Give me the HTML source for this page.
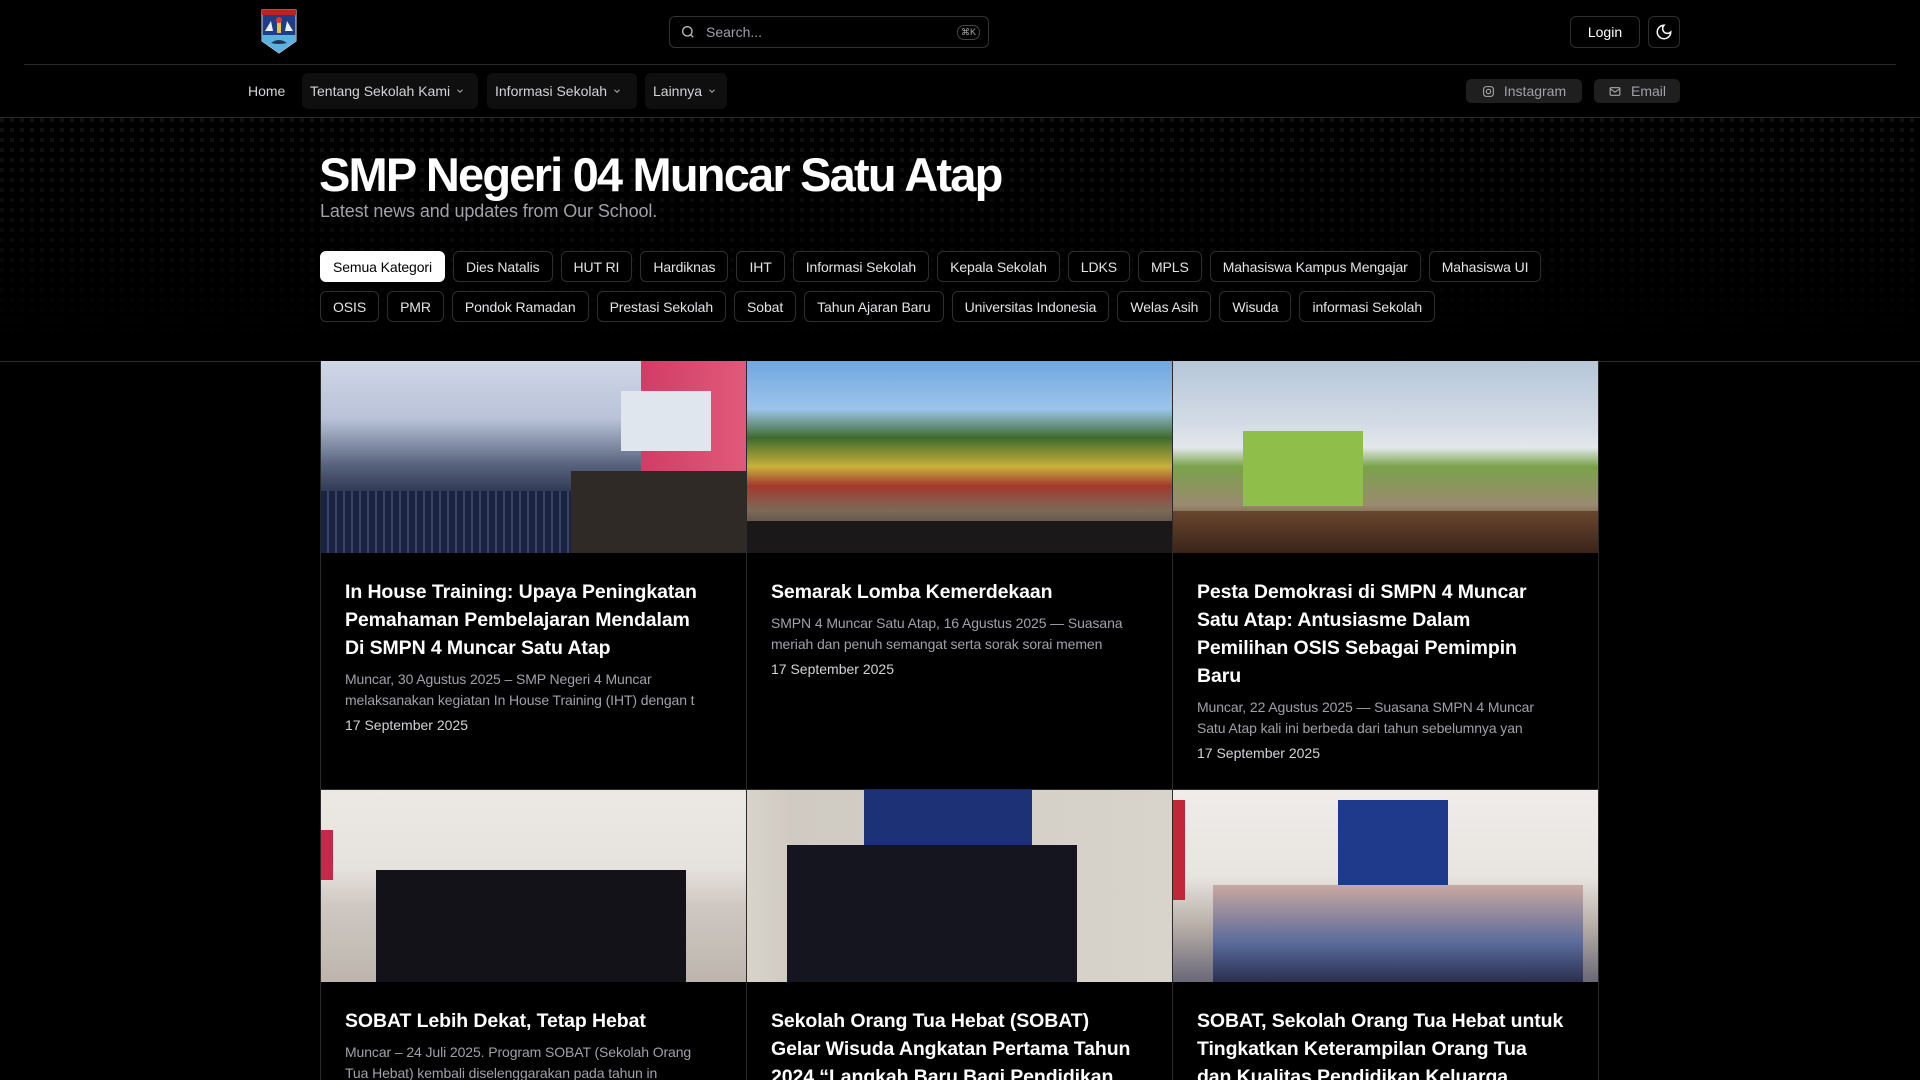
<!DOCTYPE html>
<html style="height:1080px;overflow:hidden"><head><meta charset="utf-8"><style>
*{box-sizing:border-box;margin:0;padding:0}
body{width:1920px;height:1080px;overflow:hidden;background:#000;color:#fff;font-family:"Liberation Sans",sans-serif;position:relative}
.abs{position:absolute}
.hl{position:absolute;height:1px;background:#2a2a2a}
.btn{position:absolute;border:1px solid #2e2e2e;border-radius:6px;display:flex;align-items:center;justify-content:center;font-size:14px}
.pill{position:absolute;top:73px;height:36px;background:#0f0f0f;border-radius:6px;display:flex;align-items:center;padding:0 8px;font-size:14px;color:#d4d4d8;white-space:nowrap}
.pill svg{margin-left:5px}
.soc{position:absolute;top:79px;height:24px;background:#1f1f1f;border-radius:5px;display:flex;align-items:center;justify-content:center;font-size:14px;color:#a1a1aa;gap:9px}
.dots{position:absolute;left:0;top:118px;width:1920px;height:230px;background-image:linear-gradient(90deg,transparent 4px,#000 4px),linear-gradient(transparent 4px,#000 4px);background-size:10px 10px;background-color:#121212;-webkit-mask-image:linear-gradient(rgba(0,0,0,.9) 0%,rgba(0,0,0,.4) 60%,transparent 100%);mask-image:linear-gradient(rgba(0,0,0,.9) 0%,rgba(0,0,0,.4) 60%,transparent 100%)}
.chips{position:absolute;left:320px;width:1300px;display:flex;gap:8px;flex-wrap:wrap}
.chip{height:31px;border:1px solid #2e2e2e;border-radius:6px;padding:0 12px;display:flex;align-items:center;font-size:14px;color:#e4e4e7;white-space:nowrap;letter-spacing:-.1px;background:#000}
.chip.on{background:#fff;color:#000;border-color:#fff}
.card{position:absolute;width:426px;border-left:1px solid #2a2a2a;border-bottom:1px solid #2a2a2a;overflow:hidden}
.img{height:192px;position:relative;overflow:hidden}
.ct{padding:25px 24px 0 24px}
.t{font-size:19.5px;font-weight:bold;line-height:28px;white-space:nowrap;letter-spacing:-.1px}
.e{margin-top:7px;font-size:14px;line-height:20.5px;color:#a1a1aa;white-space:nowrap;letter-spacing:-.1px}
.d{margin-top:7px;font-size:14px;color:#d4d4d8}
</style></head><body>
<svg class="abs" style="left:261px;top:9px" width="36" height="45" viewBox="0 0 36 45">
<path d="M1 1H35V32L18 44L1 32Z" fill="#1d3d8a" stroke="#ddd" stroke-width="1"/>
<rect x="1" y="1" width="34" height="5" fill="#b22"/>
<path d="M1 26H35V32L18 44L1 32Z" fill="#5ab2e0"/>
<path d="M16 10h4v14h-4z" fill="#e8c23a"/><circle cx="18" cy="11" r="3" fill="#d33"/>
<path d="M4 22L10 12L12 22Z M32 22L26 12L24 22Z" fill="#eee"/>
<path d="M10 34q8-6 16 0q-8 2-16 0z" fill="#235"/>
</svg>
<div class="btn" style="left:669px;top:16px;width:320px;height:32px;justify-content:flex-start;padding-left:10px;color:#a1a1aa;border-color:#333">
<svg width="16" height="16" viewBox="0 0 24 24" fill="none" stroke="#bbb" stroke-width="2"><circle cx="11" cy="11" r="7"/><path d="M20 20l-4-4"/></svg>
<span style="margin-left:10px;font-size:14px">Search...</span>
<span style="position:absolute;right:8px;top:8px;font-size:9px;border:1px solid #444;border-radius:7px;padding:1px 3px;color:#aaa">⌘K</span></div>
<div class="btn" style="left:1570px;top:16px;width:70px;height:32px">Login</div>
<div class="btn" style="left:1648px;top:16px;width:32px;height:32px"><svg width="18" height="18" viewBox="0 0 24 24" fill="none" stroke="#fff" stroke-width="2"><path d="M12 3a6 6 0 0 0 9 9 9 9 0 1 1-9-9z"/></svg></div>
<div class="hl" style="left:24px;top:64px;width:1872px"></div>
<div class="abs" style="left:248px;top:83px;font-size:14px;color:#d4d4d8">Home</div>
<div class="pill" style="left:302px;width:176px">Tentang Sekolah Kami<svg width="10" height="10" viewBox="0 0 24 24" fill="none" stroke="#aaa" stroke-width="2.5"><path d="M6 9l6 6 6-6"/></svg></div>
<div class="pill" style="left:487px;width:150px">Informasi Sekolah<svg width="10" height="10" viewBox="0 0 24 24" fill="none" stroke="#aaa" stroke-width="2.5"><path d="M6 9l6 6 6-6"/></svg></div>
<div class="pill" style="left:645px;width:82px">Lainnya<svg width="10" height="10" viewBox="0 0 24 24" fill="none" stroke="#aaa" stroke-width="2.5"><path d="M6 9l6 6 6-6"/></svg></div>
<div class="soc" style="left:1466px;width:116px"><svg width="13" height="13" viewBox="0 0 24 24" fill="none" stroke="#aaa" stroke-width="2"><rect x="3" y="3" width="18" height="18" rx="5"/><circle cx="12" cy="12" r="4"/></svg>Instagram</div>
<div class="soc" style="left:1594px;width:86px"><svg width="14" height="13" viewBox="0 0 24 24" fill="none" stroke="#aaa" stroke-width="2"><rect x="3" y="5" width="18" height="14" rx="2"/><path d="M3 7l9 6 9-6"/></svg>Email</div>
<div class="hl" style="left:0;top:117px;width:1920px"></div>
<div class="dots"></div>
<div class="abs" style="left:319px;top:145px;font-size:47px;font-weight:bold;letter-spacing:-1.8px;line-height:60px;white-space:nowrap">SMP Negeri 04 Muncar Satu Atap</div>
<div class="abs" style="left:320px;top:201px;font-size:18px;color:#a1a1aa;letter-spacing:-.1px">Latest news and updates from Our School.</div>
<div class="chips" style="top:251px">
<div class="chip on">Semua Kategori</div><div class="chip">Dies Natalis</div><div class="chip">HUT RI</div><div class="chip">Hardiknas</div><div class="chip">IHT</div><div class="chip">Informasi Sekolah</div><div class="chip">Kepala Sekolah</div><div class="chip">LDKS</div><div class="chip">MPLS</div><div class="chip">Mahasiswa Kampus Mengajar</div><div class="chip">Mahasiswa UI</div></div>
<div class="chips" style="top:291px">
<div class="chip">OSIS</div><div class="chip">PMR</div><div class="chip">Pondok Ramadan</div><div class="chip">Prestasi Sekolah</div><div class="chip">Sobat</div><div class="chip">Tahun Ajaran Baru</div><div class="chip">Universitas Indonesia</div><div class="chip">Welas Asih</div><div class="chip">Wisuda</div><div class="chip">informasi Sekolah</div></div>
<div class="hl" style="left:0;top:361px;width:1920px"></div>
<div class="abs" style="left:1598px;top:361px;width:1px;height:719px;background:#2a2a2a"></div>
<div class="card" style="left:320px;top:361px;height:429px">
<div class="img" style="background:linear-gradient(180deg,#cfd6e6 0%,#b9c2d8 30%,#55607a 55%,#1d2540 75%,#2a3150 100%)">
<div class="abs" style="left:320px;top:0;width:106px;height:110px;background:linear-gradient(90deg,#d23c66,#e05a7a)"></div>
<div class="abs" style="left:300px;top:30px;width:90px;height:60px;background:#dfe6ee"></div>
<div class="abs" style="left:0;top:130px;width:300px;height:62px;background:repeating-linear-gradient(90deg,#1b2342 0 6px,#3a4468 6px 8px)"></div>
<div class="abs" style="left:250px;top:110px;width:176px;height:82px;background:#2f2a26"></div></div>
<div class="ct"><div class="t">In House Training: Upaya Peningkatan<br>Pemahaman Pembelajaran Mendalam<br>Di SMPN 4 Muncar Satu Atap</div>
<div class="e">Muncar, 30 Agustus 2025 – SMP Negeri 4 Muncar<br>melaksanakan kegiatan In House Training (IHT) dengan t</div>
<div class="d">17 September 2025</div></div></div>
<div class="card" style="left:746px;top:361px;height:429px">
<div class="img" style="background:linear-gradient(180deg,#6fa7e0 0%,#9cc4ea 25%,#3f6b2e 40%,#c9b03a 55%,#a33a2e 65%,#7a6a58 78%,#2a2624 100%)">
<div class="abs" style="left:0;top:160px;width:426px;height:32px;background:#1a1818"></div></div>
<div class="ct"><div class="t">Semarak Lomba Kemerdekaan</div>
<div class="e">SMPN 4 Muncar Satu Atap, 16 Agustus 2025 — Suasana<br>meriah dan penuh semangat serta sorak sorai memen</div>
<div class="d">17 September 2025</div></div></div>
<div class="card" style="left:1172px;top:361px;height:429px">
<div class="img" style="background:linear-gradient(180deg,#b5c6d8 0%,#d5dde6 35%,#e4e8ec 45%,#7aa24a 55%,#9a8a70 75%,#5a3a28 88%,#3e2a1e 100%)">
<div class="abs" style="left:70px;top:70px;width:120px;height:75px;background:#8fbf4a"></div>
<div class="abs" style="left:0;top:150px;width:426px;height:42px;background:linear-gradient(#6a4630,#3a2418)"></div></div>
<div class="ct"><div class="t">Pesta Demokrasi di SMPN 4 Muncar<br>Satu Atap: Antusiasme Dalam<br>Pemilihan OSIS Sebagai Pemimpin<br>Baru</div>
<div class="e">Muncar, 22 Agustus 2025 — Suasana SMPN 4 Muncar<br>Satu Atap kali ini berbeda dari tahun sebelumnya yan</div>
<div class="d">17 September 2025</div></div></div>
<div class="card" style="left:320px;top:790px;height:290px;border-bottom:none">
<div class="img" style="background:linear-gradient(180deg,#ece8e4 0%,#e6e2de 40%,#cfc8c2 60%,#bdb5ad 100%)">
<div class="abs" style="left:55px;top:80px;width:310px;height:112px;background:#121218"></div>
<div class="abs" style="left:0;top:40px;width:12px;height:50px;background:#c32a4a"></div></div>
<div class="ct"><div class="t">SOBAT Lebih Dekat, Tetap Hebat</div>
<div class="e">Muncar – 24 Juli 2025. Program SOBAT (Sekolah Orang<br>Tua Hebat) kembali diselenggarakan pada tahun in</div></div></div>
<div class="card" style="left:746px;top:790px;height:290px;border-bottom:none">
<div class="img" style="background:linear-gradient(90deg,#d8d4cc 0%,#cfcac2 10%,#d8d4cc 100%)">
<div class="abs" style="left:117px;top:0;width:168px;height:80px;background:#1d3276"></div>
<div class="abs" style="left:40px;top:55px;width:290px;height:137px;background:#14151e"></div></div>
<div class="ct"><div class="t">Sekolah Orang Tua Hebat (SOBAT)<br>Gelar Wisuda Angkatan Pertama Tahun<br>2024 “Langkah Baru Bagi Pendidikan</div></div></div>
<div class="card" style="left:1172px;top:790px;height:290px;border-bottom:none">
<div class="img" style="background:linear-gradient(180deg,#efecea 0%,#e8e4e0 45%,#b8b0a8 70%,#6a6878 100%)">
<div class="abs" style="left:165px;top:10px;width:110px;height:120px;background:#1f3a8a"></div>
<div class="abs" style="left:0;top:10px;width:12px;height:100px;background:#c0283a"></div>
<div class="abs" style="left:40px;top:95px;width:370px;height:97px;background:linear-gradient(#c9a8a0,#5a6a9a 60%,#2a3050)"></div></div>
<div class="ct"><div class="t">SOBAT, Sekolah Orang Tua Hebat untuk<br>Tingkatkan Keterampilan Orang Tua<br>dan Kualitas Pendidikan Keluarga</div></div></div>
</body></html>
